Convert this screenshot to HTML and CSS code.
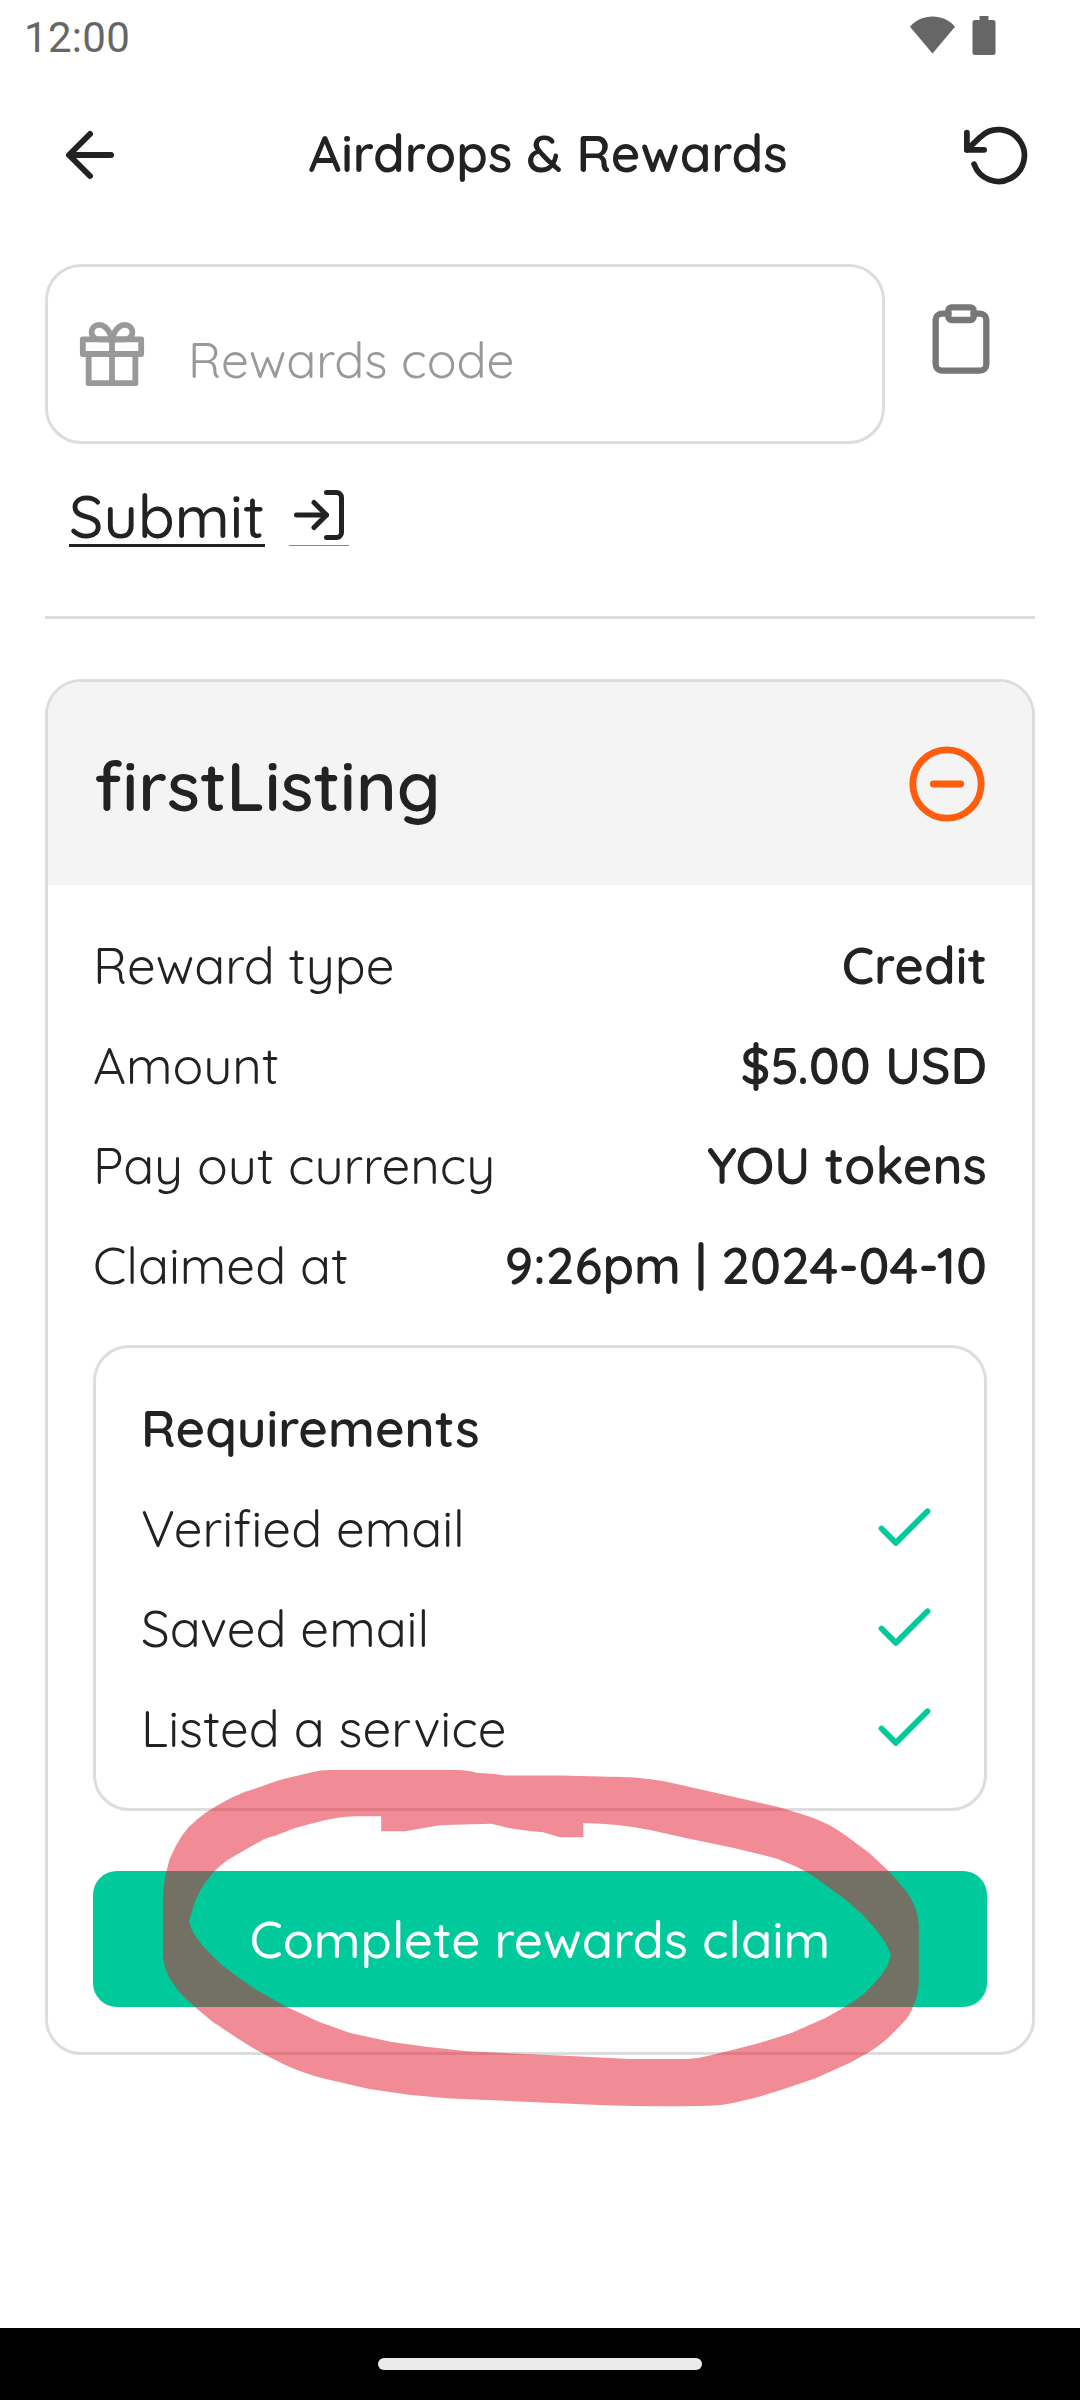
FILE: index.html
```html
<!DOCTYPE html>
<html lang="en">

<head>
    <meta charset="UTF-8">
    <meta name="viewport" content="width=device-width, initial-scale=1.0">
    <title>Airdrops & Rewards</title>
    <link rel="stylesheet" href="styles.css">
</head>

<body>
    <div id="app">
        <div class="status-bar">
            <span class="time">12:00</span>
            <div class="status-icons">
                <svg class="wifi" width="45" height="38" viewBox="0 0 46 38">
                    <path d="M0 10.500C6 3.500 14 0 23 0s17 3.500 23 10.500L23 38z" />
                </svg>
                <svg class="battery" width="24" height="39" viewBox="0 0 24 39">
                    <path d="M7.500 0h9v4H21a2.500 2.500 0 0 1 2.500 2.500v30A2.500 2.500 0 0 1 21 39H3a2.500 2.500 0 0 1-2.500-2.500v-30A2.500 2.500 0 0 1 3 4h4.500z" />
                </svg>
            </div>
        </div>

        <div class="header">
            <svg class="icon back" viewBox="0 0 24 24">
                <path d="M19 12H5.200M12 19l-7-7 7-7" />
            </svg>
            <h1 class="title">Airdrops &amp; Rewards</h1>
            <svg class="icon refresh" viewBox="0 0 24 24">
                <path d="M1 4v6h6" />
                <path d="M3.510 15a9 9 0 1 0 2.130-9.360L1 10" />
            </svg>
        </div>

        <div class="content">
            <div class="code-row">
                <label class="code-box">
                    <svg class="icon gift" viewBox="0 0 24 24">
                        <path d="M20 12v10H4V12" />
                        <path d="M2 7h20v5H2z" />
                        <path d="M12 22V7" />
                        <path d="M12 7H7.500a2.500 2.500 0 0 1 0-5C11 2 12 7 12 7z" />
                        <path d="M12 7h4.500a2.500 2.500 0 0 0 0-5C13 2 12 7 12 7z" />
                    </svg>
                    <input type="text" class="code" placeholder="Rewards code">
                </label>
                <svg class="icon clipboard" viewBox="0 0 24 24">
                    <path d="M16 4h2a2 2 0 0 1 2 2v14a2 2 0 0 1-2 2H6a2 2 0 0 1-2-2V6a2 2 0 0 1 2-2h2" />
                    <rect x="8" y="2" width="8" height="4" rx="1" />
                </svg>
            </div>

            <div class="submit">
                <span class="submit-text">Submit</span>
                <span class="submit-icon">
                    <svg class="icon login" viewBox="0 0 24 24">
                        <path d="M15 3h4a2 2 0 0 1 2 2v14a2 2 0 0 1-2 2h-4" />
                        <path d="M10 17l5-5-5-5" />
                        <path d="M15 12H3" />
                    </svg>
                </span>
            </div>

            <div class="divider"></div>

            <div class="card">
                <div class="card-header">
                    <h2 class="card-title">firstListing</h2>
                    <svg class="icon minus" viewBox="0 0 24 24">
                        <circle cx="12" cy="12" r="10" />
                        <path d="M8 12h8" />
                    </svg>
                </div>
                <div class="card-body">
                    <div class="row">
                        <span class="label">Reward type</span>
                        <span class="value">Credit</span>
                    </div>
                    <div class="row">
                        <span class="label">Amount</span>
                        <span class="value">$5.00 USD</span>
                    </div>
                    <div class="row">
                        <span class="label">Pay out currency</span>
                        <span class="value">YOU tokens</span>
                    </div>
                    <div class="row">
                        <span class="label">Claimed at</span>
                        <span class="value">9:26pm | 2024-04-10</span>
                    </div>

                    <div class="requirements">
                        <h3 class="row">Requirements</h3>
                        <div class="row">
                            <span class="label">Verified email</span>
                            <svg class="icon check" viewBox="0 0 24 24"><path d="M20 6L9 17l-5-5" /></svg>
                        </div>
                        <div class="row">
                            <span class="label">Saved email</span>
                            <svg class="icon check" viewBox="0 0 24 24"><path d="M20 6L9 17l-5-5" /></svg>
                        </div>
                        <div class="row">
                            <span class="label">Listed a service</span>
                            <svg class="icon check" viewBox="0 0 24 24"><path d="M20 6L9 17l-5-5" /></svg>
                        </div>
                    </div>

                    <button class="claim">Complete rewards claim</button>
                </div>
            </div>
        </div>

        <div class="nav-bar">
            <div class="pill"></div>
        </div>

        <!-- marker ring round the claim button -->
        <svg class="marker" viewBox="150 1750 800 370">
            <path fill-rule="evenodd" d="M570 1775.500H504L495 1774L476 1772.700Q468 1770 457 1770H329.600Q321 1770 314 1771.700L295 1776.300Q281 1779 267.600 1784.300L252 1789.700L245 1791.700L231.400 1797.700L219.400 1804.300L206.300 1812.300Q197 1819 188.400 1827.300Q181 1836 176.300 1845L169.500 1859.300L166 1873.300Q163 1886 163 1903V1956.700Q164 1964 166 1970Q168 1976 171.900 1981.700Q176 1988 181.500 1994.300L195.300 2007.300L212.500 2021.700L236.600 2037.700Q260 2053 284.800 2064.700Q303 2073 322.700 2078.300L369.200 2089L408.800 2094.700L446.700 2098.300L570 2103.700L605.400 2105.300Q655 2107 708.700 2105.700Q721 2105.500 732.800 2103L753.500 2098.300L781 2090L815.500 2078.300L850 2062.700L868.900 2052.300Q879 2046 887.800 2038.300L901.600 2024.300Q906 2020 908.500 2016Q912 2011 913.600 2005Q919 1993 918.800 1980V1926.700Q918.500 1908 906.700 1891.700L887.800 1870.300L868.900 1852.700L846.500 1836Q838 1830 829.300 1825Q819 1820 808.600 1816.300L781 1807.700L715.600 1792.700L677.700 1784.300Q643 1776 608.900 1776.700L561 1775.500Z
                M381.200 1816.300H357Q346 1816.300 336.500 1818L326 1820L309 1824.300L295 1828L274.500 1836Q269 1837 264 1839.300L248.700 1847.700L228 1859.700Q219 1866 212.500 1873.300L202.900 1885.700Q195 1899 191.800 1911.700L189 1921L191.800 1930Q196 1938 203.900 1947Q215 1960 229.700 1971L253.800 1988.300L284.800 2006L319.300 2022L350.200 2033L391.600 2042L426 2046.700L467.300 2051.300L570 2056L629.500 2059H688Q699 2058.300 708.700 2055.700L729.400 2050.700L760.400 2042.700L791.400 2033L825.800 2017.700L843 2008Q854 2002 863.700 1994Q872 1986 879.200 1977.700Q884 1972 887 1966.700L891 1955L886 1943.300L875.700 1929.300L862 1914L844.800 1899L822.400 1882.700Q806 1870 788 1863.300Q777 1858 763.800 1855.300L732.800 1847.700L684.600 1837.700L650 1830Q618 1823.500 583.400 1823V1837.300H560L543 1832.300L529.300 1831L508.700 1828L491.400 1823.700L445 1825Q438 1825 431 1826.700L405.300 1831.300H381.200Z" />
        </svg>
    </div>
</body>

</html>
```
FILE: styles.css
```css
body,
h1,
h2,
h3 {
    margin: 0;
    padding: 0;
}

body {
    background-color: #fff;
    color: #222;
    font-family: Quicksand, Lato, "Open Sans", sans-serif;
}

#app {
    position: relative;
    display: flex;
    flex-direction: column;
    width: 1080px;
    height: 2400px;
}

.icon {
    display: block;
    flex: none;
    fill: none;
    stroke: #222;
    stroke-width: 2;
    stroke-linecap: round;
    stroke-linejoin: round;
}

/* status bar */
.status-bar {
    display: flex;
    box-sizing: border-box;
    height: 76px;
    padding: 0 84px 0 24px;
    justify-content: space-between;
    align-items: center;
}

.time {
    margin-bottom: 2px;
    font-family: Roboto, sans-serif;
    font-size: 42px;
    letter-spacing: 0.3px;
    color: #666;
}

.status-icons {
    display: flex;
    gap: 17px;
    margin-bottom: 5px;
    fill: #666;
}

/* header */
.header {
    display: flex;
    box-sizing: border-box;
    height: 158px;
    padding: 0 47px 0 54px;
    justify-content: space-between;
    align-items: center;
}

.back {
    width: 72px;
    height: 72px;
}

.refresh {
    width: 69px;
    height: 69px;
}

.title {
    padding: 0 0 5px 6px;
    font-size: 51px;
    line-height: 60px;
    font-weight: 600;
}

/* rewards code */
.content {
    padding: 30px 45px 0;
}

.code-row {
    display: flex;
    align-items: flex-start;
}

.code-box {
    display: flex;
    box-sizing: border-box;
    width: 840px;
    height: 180px;
    padding: 0 29px;
    align-items: center;
    gap: 41px;
    border: 3px solid #ddd;
    border-radius: 36px;
}

.gift {
    width: 70px;
    height: 70px;
    stroke: #999;
}

.code {
    flex: 1;
    min-width: 0;
    height: 60px;
    padding: 9px 0 0;
    border: none;
    outline: none;
    background: none;
    font-family: inherit;
    font-size: 49.5px;
    font-weight: 400;
}

.code::placeholder {
    color: #999;
}

.clipboard {
    width: 76px;
    height: 76px;
    margin: 37px 0 0 38px;
    stroke: #777;
}

.submit {
    display: flex;
    align-items: flex-start;
    gap: 24px;
    height: 62px;
    margin: 41px 0 0 24px;
}

.submit-text {
    width: 196px;
    margin-top: 2px;
    border-bottom: 3px solid #222;
    font-size: 60px;
    font-weight: 500;
    line-height: 57px;
}

.submit-icon {
    border-bottom: 1px solid #888;
}

.login {
    width: 60px;
    height: 60px;
}

.divider {
    height: 3px;
    margin: 69px 0 60px;
    background-color: #ddd;
}

/* card */
.card {
    border: 3px solid #ddd;
    border-radius: 36px;
    overflow: hidden;
}

.card-header {
    display: flex;
    height: 203px;
    padding: 0 44px 0 45px;
    justify-content: space-between;
    align-items: center;
    background-color: #f4f4f4;
}

.card-title {
    padding: 3px 0 0 1px;
    font-size: 69px;
    font-weight: 600;
}

.minus {
    width: 82px;
    height: 82px;
    stroke: #ff5e0e;
}

.card-body {
    padding: 30px 45px 45px;
}

.row {
    display: flex;
    height: 100px;
    justify-content: space-between;
    align-items: center;
    font-size: 51px;
    line-height: 60px;
    font-weight: 600;
}

.label {
    font-weight: 400;
}

.requirements {
    margin-top: 30px;
    padding: 30px 45px;
    border: 3px solid #ddd;
    border-radius: 36px;
}

.check {
    width: 69px;
    height: 69px;
    stroke: #00ca9b;
}

.claim {
    display: block;
    width: 100%;
    height: 136px;
    margin-top: 60px;
    padding: 0;
    border: none;
    border-radius: 24px;
    background-color: #00ca9b;
    color: #fff;
    font-family: inherit;
    font-size: 51px;
    font-weight: 500;
    line-height: 60px;
}

/* bottom navigation */
.nav-bar {
    display: flex;
    height: 72px;
    margin-top: auto;
    justify-content: center;
    align-items: center;
    background-color: #000;
}

.pill {
    width: 324px;
    height: 12px;
    border-radius: 6px;
    background-color: #ebebeb;
}

.marker {
    position: absolute;
    left: 150px;
    top: 1750px;
    width: 800px;
    height: 370px;
    fill: rgba(227, 23, 45, 0.5);
    pointer-events: none;
}
```
